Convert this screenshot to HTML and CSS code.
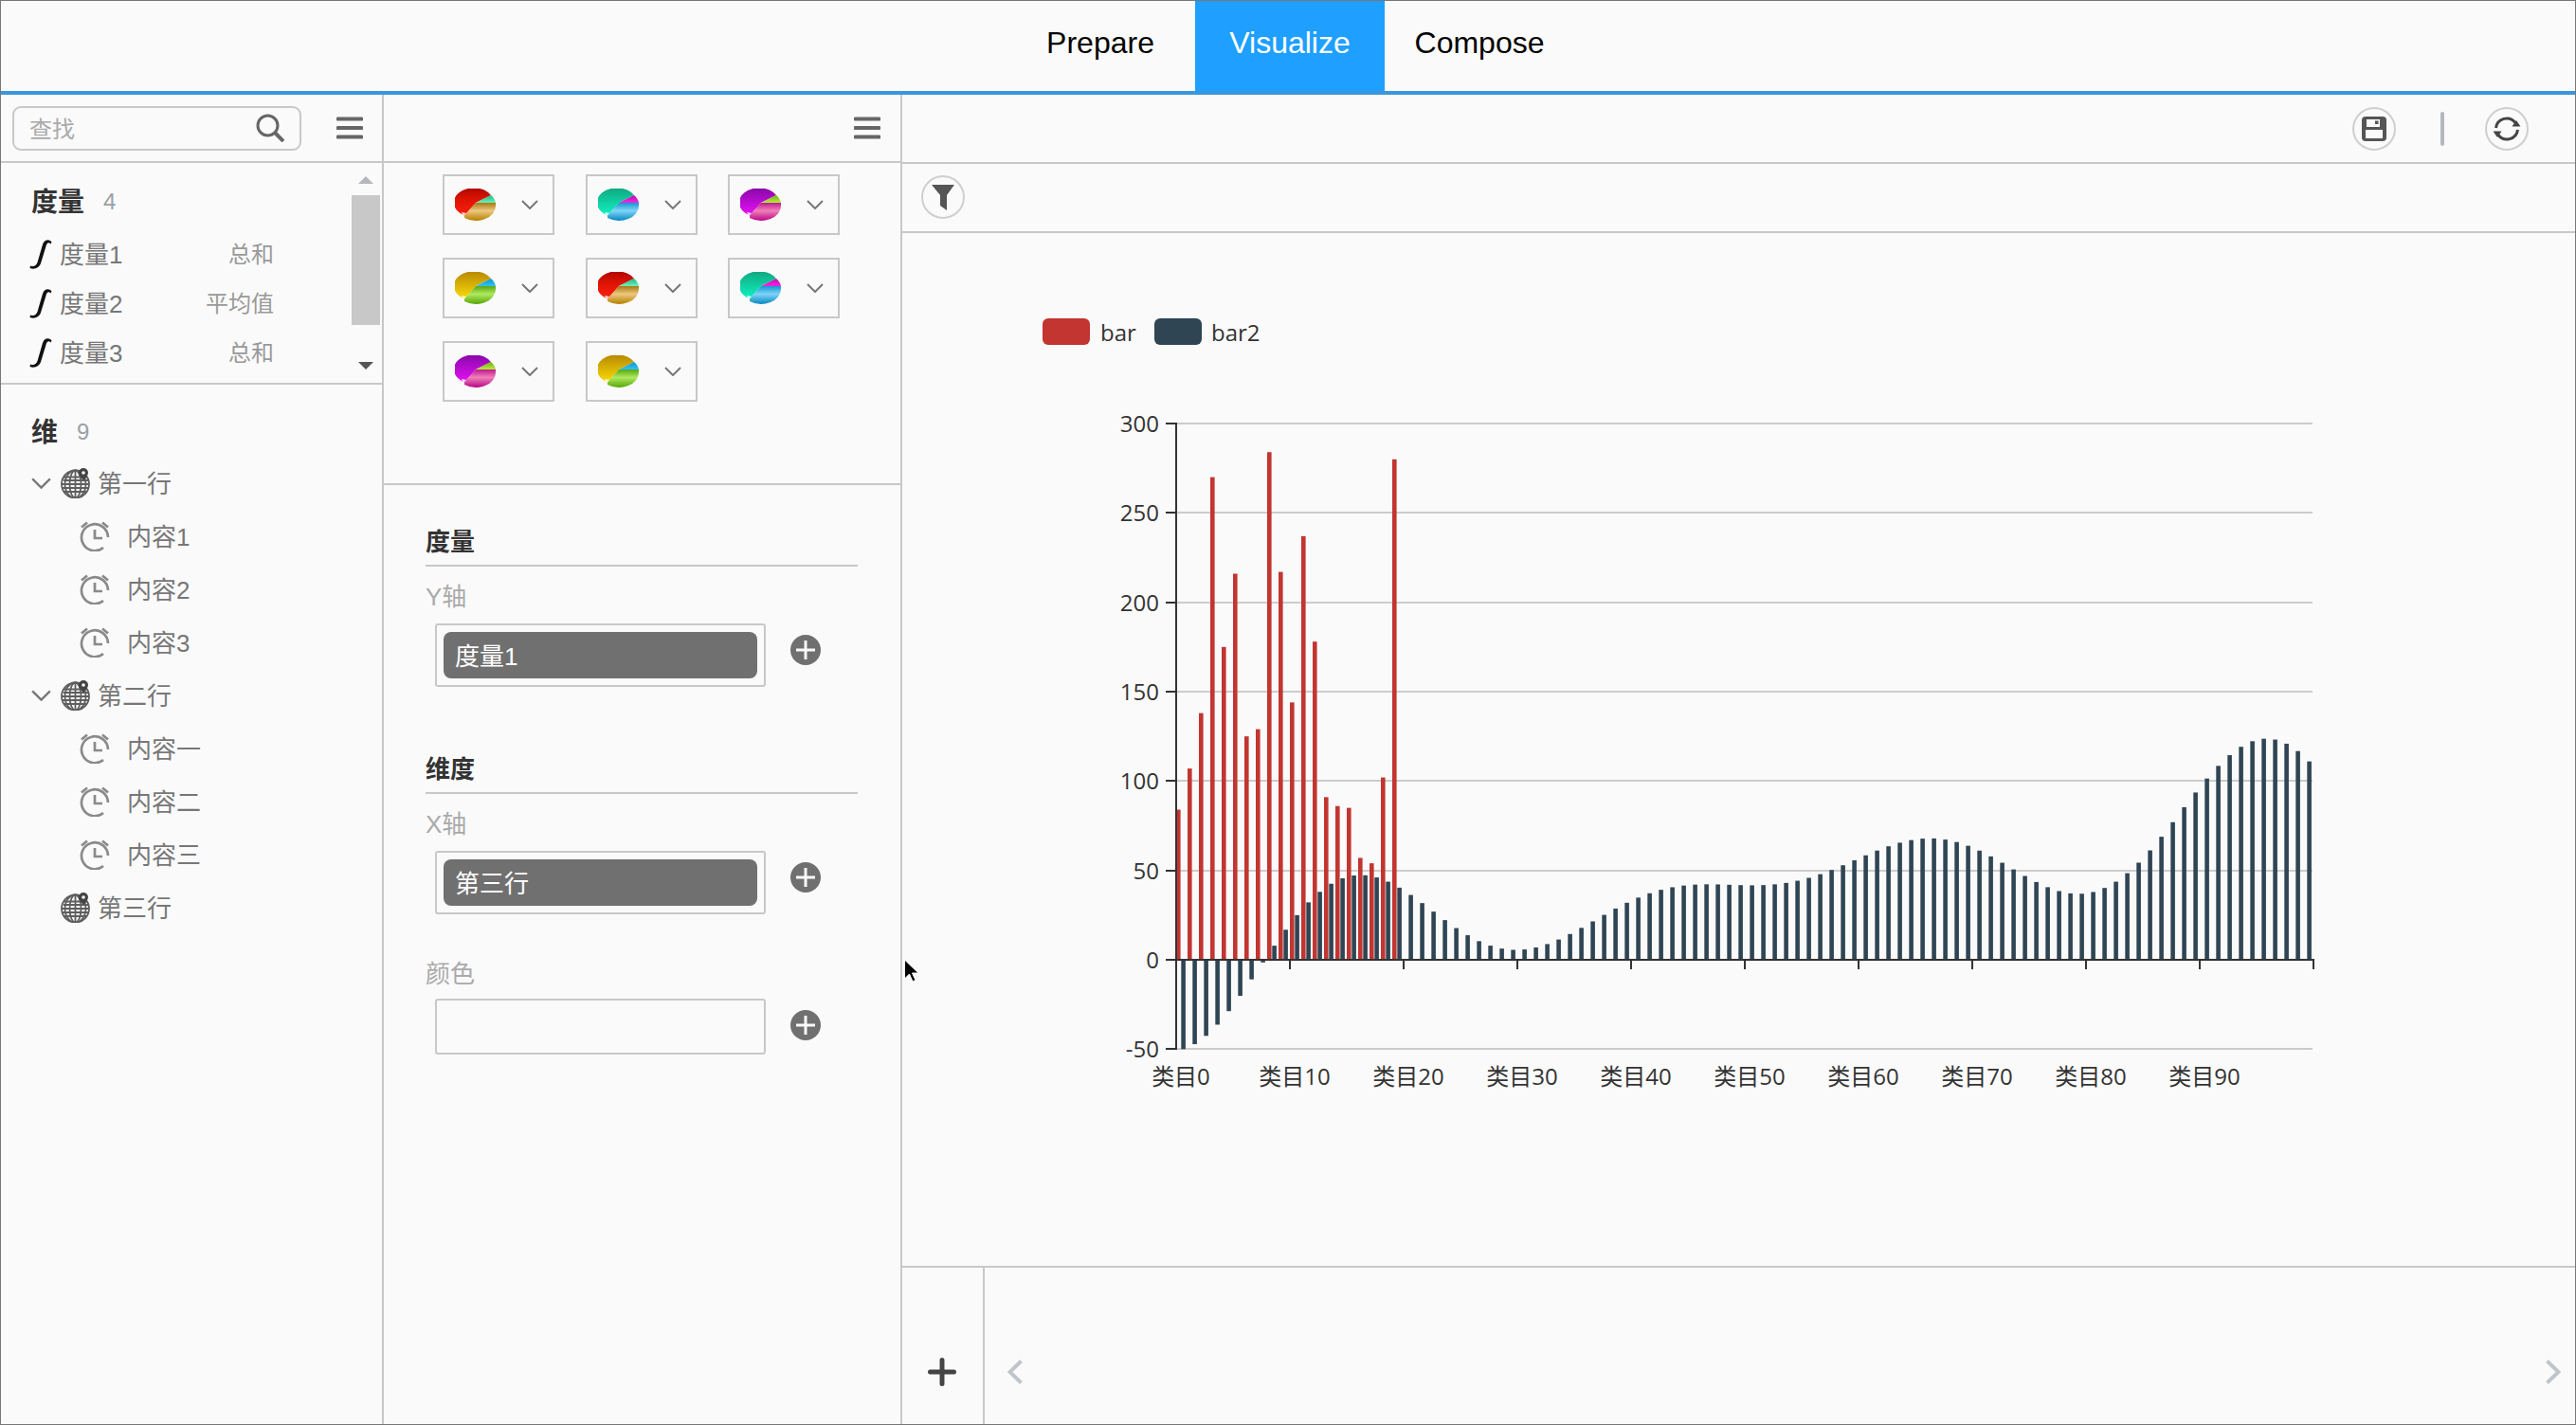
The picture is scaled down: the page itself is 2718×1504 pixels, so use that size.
FILE: index.html
```html
<!DOCTYPE html>
<html lang="zh">
<head>
<meta charset="utf-8">
<title>Visualize</title>
<link rel="stylesheet" href="styles.css">
</head>
<body>
<svg class="defs" width="0" height="0" aria-hidden="true">
  <defs>
    <linearGradient id="rm" x1="0" y1="0" x2="0" y2="1"><stop offset="0" stop-color="#b00800"/><stop offset=".45" stop-color="#e01404"/><stop offset="1" stop-color="#fa2010"/></linearGradient>
    <linearGradient id="rs" x1="0" y1="0" x2="0" y2="1"><stop offset="0" stop-color="#18b884"/><stop offset="1" stop-color="#70f0b8"/></linearGradient>
    <linearGradient id="rl" x1="0" y1="0" x2="0" y2="1"><stop offset="0" stop-color="#a87810"/><stop offset=".45" stop-color="#ecc880"/><stop offset="1" stop-color="#b88000"/></linearGradient>
    <linearGradient id="tm" x1="0" y1="0" x2="0" y2="1"><stop offset="0" stop-color="#10a880"/><stop offset="1" stop-color="#10f4c4"/></linearGradient>
    <linearGradient id="ts" x1="0" y1="0" x2="0" y2="1"><stop offset="0" stop-color="#b810a8"/><stop offset="1" stop-color="#f424e4"/></linearGradient>
    <linearGradient id="tl" x1="0" y1="0" x2="0" y2="1"><stop offset="0" stop-color="#1098d0"/><stop offset=".45" stop-color="#80d4f8"/><stop offset="1" stop-color="#0888c0"/></linearGradient>
    <linearGradient id="pm" x1="0" y1="0" x2="0" y2="1"><stop offset="0" stop-color="#8808a8"/><stop offset="1" stop-color="#e810f8"/></linearGradient>
    <linearGradient id="ps" x1="0" y1="0" x2="0" y2="1"><stop offset="0" stop-color="#70b010"/><stop offset="1" stop-color="#b8ec40"/></linearGradient>
    <linearGradient id="pl" x1="0" y1="0" x2="0" y2="1"><stop offset="0" stop-color="#c01890"/><stop offset=".45" stop-color="#f080b8"/><stop offset="1" stop-color="#b80888"/></linearGradient>
    <linearGradient id="gm" x1="0" y1="0" x2="0" y2="1"><stop offset="0" stop-color="#b88800"/><stop offset="1" stop-color="#fadc08"/></linearGradient>
    <linearGradient id="gs" x1="0" y1="0" x2="0" y2="1"><stop offset="0" stop-color="#1090d0"/><stop offset="1" stop-color="#30c4f0"/></linearGradient>
    <linearGradient id="gl" x1="0" y1="0" x2="0" y2="1"><stop offset="0" stop-color="#58a810"/><stop offset=".45" stop-color="#b0e860"/><stop offset="1" stop-color="#58a808"/></linearGradient>

    <symbol id="pie-red" viewBox="0 0 44 34"><path fill="url(#rm)" d="M22 15 38 7A21 15.500 0 1 0 10 28.500z"/><path fill="url(#rs)" d="M22 15 38 7A21 15.500 0 0 1 43 15z"/><path fill="url(#rl)" d="M22 15 43 15V18A21 15.500 0 0 1 10 31V28.500z"/><path fill="#ffe0d0" d="M7 25l5 1-3 3z"/></symbol>
    <symbol id="pie-teal" viewBox="0 0 44 34"><path fill="url(#tm)" d="M22 15 38 7A21 15.500 0 1 0 10 28.500z"/><path fill="url(#ts)" d="M22 15 38 7A21 15.500 0 0 1 43 15z"/><path fill="url(#tl)" d="M22 15 43 15V18A21 15.500 0 0 1 10 31V28.500z"/><path fill="#e0fff0" d="M7 25l5 1-3 3z"/></symbol>
    <symbol id="pie-purple" viewBox="0 0 44 34"><path fill="url(#pm)" d="M22 15 38 7A21 15.500 0 1 0 10 28.500z"/><path fill="url(#ps)" d="M22 15 38 7A21 15.500 0 0 1 43 15z"/><path fill="url(#pl)" d="M22 15 43 15V18A21 15.500 0 0 1 10 31V28.500z"/><path fill="#ffe0ff" d="M7 25l5 1-3 3z"/></symbol>
    <symbol id="pie-gold" viewBox="0 0 44 34"><path fill="url(#gm)" d="M22 15 38 7A21 15.500 0 1 0 10 28.500z"/><path fill="url(#gs)" d="M22 15 38 7A21 15.500 0 0 1 43 15z"/><path fill="url(#gl)" d="M22 15 43 15V18A21 15.500 0 0 1 10 31V28.500z"/><path fill="#fff8d0" d="M7 25l5 1-3 3z"/></symbol>

    <symbol id="menu" viewBox="0 0 28 24"><path d="M1.500 2.500h25M1.500 12h25M1.500 21.500h25" fill="none" stroke="#666" stroke-width="4" stroke-linecap="round"/></symbol>
    <symbol id="chev" viewBox="0 0 18 10"><path d="M1 1l8 8 8-8" fill="none" stroke="#777" stroke-width="2"/></symbol>
    <symbol id="fx" viewBox="0 0 24 32"><path fill="#111" d="M23.500 3.500C21 .2 16 .2 14 6L8.500 25C7.500 28 5 30 1 28.500L.5 31C6 33 10.500 30 12 26L17.500 8C18.500 4 20.500 3.500 22.500 5.500z"/></symbol>
    <symbol id="globe" viewBox="0 0 32 32">
      <g fill="none" stroke="#5f5f5f" stroke-width="1.800"><circle cx="15.500" cy="17" r="14.500"/><ellipse cx="15.500" cy="17" rx="6" ry="14.500"/><ellipse cx="15.500" cy="17" rx="11" ry="14.500"/><path d="M15.500 2.500v29M1 17h29M3 9.500h25M3 13h26M2 21h27M3 25h25"/></g>
      <path d="M24 0a5 5 0 0 1 5 5c0 3-5 8-5 8s-5-5-5-8a5 5 0 0 1 5-5z" fill="#444"/><circle cx="24" cy="5" r="1.800" fill="#fafafa"/>
    </symbol>
    <symbol id="clock" viewBox="0 0 32 32"><g fill="none" stroke="#8a8a8a" stroke-width="2.700"><path d="M25 28A14 14 0 1 1 30 17"/><path d="M16 9v9h8"/><path d="M2 6.500 8 1.500M24 1.500l6 5"/></g></symbol>
    <symbol id="plus" viewBox="0 0 32 32"><circle cx="16" cy="16" r="16" fill="#707070"/><path d="M6 16h20M16 6v20" stroke="#fafafa" stroke-width="3"/></symbol>
  </defs>
</svg>

<div class="app">
  <header class="topbar">
    <nav class="tabs">
      <a class="tab">Prepare</a>
      <a class="tab tab-active">Visualize</a>
      <a class="tab">Compose</a>
    </nav>
  </header>

  <main class="workspace">
    <aside class="data-panel">
      <div class="panel-head">
        <div class="search">
          <span class="search-text">查找</span>
          <svg class="search-icon" viewBox="0 0 30 30"><circle cx="12.500" cy="12.500" r="10.500" fill="none" stroke="#666" stroke-width="3"/><path d="M20 20l9 9" stroke="#666" stroke-width="4"/></svg>
        </div>
        <svg class="menu-icon"><use href="#menu"/></svg>
      </div>

      <section class="measures">
        <div class="measure-list">
          <h3 class="group-title">度量<span class="group-count">4</span></h3>
          <div class="measure"><svg class="fx"><use href="#fx"/></svg><span class="item-name">度量1</span><span class="agg">总和</span></div>
          <div class="measure"><svg class="fx"><use href="#fx"/></svg><span class="item-name">度量2</span><span class="agg">平均值</span></div>
          <div class="measure"><svg class="fx"><use href="#fx"/></svg><span class="item-name">度量3</span><span class="agg">总和</span></div>
        </div>
        <div class="scrollbar">
          <i class="arrow-up"></i>
          <i class="thumb"></i>
          <i class="arrow-down"></i>
        </div>
      </section>

      <section class="dimensions">
        <h3 class="group-title">维<span class="group-count">9</span></h3>
        <div class="tree-row"><svg class="tree-chev"><use href="#chev"/></svg><svg class="globe"><use href="#globe"/></svg><span class="item-name">第一行</span></div>
        <div class="leaf-row"><svg class="clock"><use href="#clock"/></svg><span class="item-name">内容1</span></div>
        <div class="leaf-row"><svg class="clock"><use href="#clock"/></svg><span class="item-name">内容2</span></div>
        <div class="leaf-row"><svg class="clock"><use href="#clock"/></svg><span class="item-name">内容3</span></div>
        <div class="tree-row"><svg class="tree-chev"><use href="#chev"/></svg><svg class="globe"><use href="#globe"/></svg><span class="item-name">第二行</span></div>
        <div class="leaf-row"><svg class="clock"><use href="#clock"/></svg><span class="item-name">内容一</span></div>
        <div class="leaf-row"><svg class="clock"><use href="#clock"/></svg><span class="item-name">内容二</span></div>
        <div class="leaf-row"><svg class="clock"><use href="#clock"/></svg><span class="item-name">内容三</span></div>
        <div class="tree-row tree-row-plain"><svg class="globe"><use href="#globe"/></svg><span class="item-name">第三行</span></div>
      </section>
    </aside>

    <section class="config-panel">
      <div class="panel-head panel-head-end">
        <svg class="menu-icon"><use href="#menu"/></svg>
      </div>
      <div class="chart-types">
        <div class="type-card"><svg class="pie"><use href="#pie-red"/></svg><svg class="card-chev"><use href="#chev"/></svg></div>
        <div class="type-card"><svg class="pie"><use href="#pie-teal"/></svg><svg class="card-chev"><use href="#chev"/></svg></div>
        <div class="type-card"><svg class="pie"><use href="#pie-purple"/></svg><svg class="card-chev"><use href="#chev"/></svg></div>
        <div class="type-card"><svg class="pie"><use href="#pie-gold"/></svg><svg class="card-chev"><use href="#chev"/></svg></div>
        <div class="type-card"><svg class="pie"><use href="#pie-red"/></svg><svg class="card-chev"><use href="#chev"/></svg></div>
        <div class="type-card"><svg class="pie"><use href="#pie-teal"/></svg><svg class="card-chev"><use href="#chev"/></svg></div>
        <div class="type-card"><svg class="pie"><use href="#pie-purple"/></svg><svg class="card-chev"><use href="#chev"/></svg></div>
        <div class="type-card"><svg class="pie"><use href="#pie-gold"/></svg><svg class="card-chev"><use href="#chev"/></svg></div>
      </div>
      <div class="shelves">
        <h4 class="shelf-title">度量</h4>
        <div class="shelf-label">Y轴</div>
        <div class="shelf-row">
          <div class="drop-box"><span class="chip">度量1</span></div>
          <svg class="add-btn"><use href="#plus"/></svg>
        </div>
        <h4 class="shelf-title shelf-title-next">维度</h4>
        <div class="shelf-label">X轴</div>
        <div class="shelf-row">
          <div class="drop-box"><span class="chip">第三行</span></div>
          <svg class="add-btn"><use href="#plus"/></svg>
        </div>
        <div class="shelf-label shelf-label-color">颜色</div>
        <div class="shelf-row shelf-row-color">
          <div class="drop-box drop-box-empty"></div>
          <svg class="add-btn"><use href="#plus"/></svg>
        </div>
      </div>
    </section>

    <section class="view-panel">
      <div class="view-toolbar">
        <span class="round-btn">
          <svg class="save-icon" viewBox="0 0 26 26"><path fill="#555" d="M4 0h18a4 4 0 0 1 4 4v18a4 4 0 0 1-4 4H4a4 4 0 0 1-4-4V4a4 4 0 0 1 4-4z"/><rect x="5" y="3" width="14" height="8" fill="#fafafa"/><rect x="14" y="4.500" width="3.500" height="3.500" fill="#555"/><rect x="4" y="14" width="18" height="9" fill="#fafafa"/></svg>
        </span>
        <i class="toolbar-sep"></i>
        <span class="round-btn">
          <svg class="refresh-icon" viewBox="0 0 30 30"><g fill="none" stroke="#444" stroke-width="3"><path d="M3.500 14A11.500 11.500 0 0 1 24 8.500"/><path d="M26.500 16A11.500 11.500 0 0 1 6 21.500"/></g><path fill="#444" d="M20.500 12.500h9l-4.500-6.500zM.5 17.500h9l-4.500 6.500z"/></svg>
        </span>
      </div>
      <div class="filter-bar">
        <span class="round-btn">
          <svg class="funnel-icon" viewBox="0 0 24 28"><path fill="#555" d="M0 1h24L16 12v16l-7-5V12z"/></svg>
        </span>
      </div>
      <div class="chart-area">
        <svg id="chart" class="chart" width="1765" height="1090" viewBox="952 246 1765 1090"></svg>
      </div>
      <div class="sheet-bar">
        <div class="sheet-add">
          <svg class="sheet-plus" viewBox="0 0 30 30"><path d="M2.500 15h25M15 2.500v25" stroke="#444" stroke-width="5" stroke-linecap="round"/></svg>
        </div>
        <div class="sheet-nav">
          <svg class="sheet-arrow" viewBox="0 0 16 26"><path d="M14.500 1.500 2.500 13l12 11.500" fill="none" stroke="#c0c5ca" stroke-width="4"/></svg>
          <svg class="sheet-arrow" viewBox="0 0 16 26"><path d="M1.500 1.500 13.500 13l-12 11.500" fill="none" stroke="#c0c5ca" stroke-width="4"/></svg>
        </div>
      </div>
    </section>
  </main>

  <svg class="cursor" viewBox="0 0 17 26"><path d="M1.500 1v20l5-5 3.500 8 3-1.500-3.500-7.500H16z" fill="#000" stroke="#fff" stroke-width="1"/></svg>
</div>
<script src="script.js"></script>
</body>
</html>
```
FILE: styles.css
```css
* { box-sizing: border-box; }
html, body { margin: 0; padding: 0; background: #fafafa; }
body {
  width: 2718px; height: 1504px; overflow: hidden;
  font-family: "Liberation Sans", "Noto Sans CJK SC", sans-serif;
  color: #777;
}
.defs { position: absolute; }
h3, h4 { margin: 0; }

.app {
  position: relative;
  width: 2718px; height: 1504px;
  border: 1px solid #777;
  display: flex; flex-direction: column;
  background: #fafafa;
}

/* top bar */
.topbar { flex: 0 0 99px; border-bottom: 4px solid #3a96dd; }
.tabs { display: flex; justify-content: center; height: 95px; padding-left: 4px; }
.tab { width: 200px; display: flex; align-items: center; justify-content: center; font-size: 32px; color: #000; padding-bottom: 6px; }
.tab-active { background: #1f9fff; color: #fff; }

.workspace { flex: 1; display: flex; min-height: 0; }

.panel-head { height: 72px; border-bottom: 2px solid #c8c8c8; display: flex; align-items: center; }
.panel-head-end { justify-content: flex-end; padding-right: 21px; }
.menu-icon { width: 28px; height: 24px; display: block; }

/* left panel */
.data-panel { width: 404px; border-right: 2px solid #c8c8c8; display: flex; flex-direction: column; }
.data-panel .panel-head { padding-left: 12px; gap: 37px; }
.search { width: 305px; height: 47px; border: 2px solid #c8c8c8; border-radius: 9px; display: flex; align-items: center; padding: 0 16px 0 16px; }
.search-text { font-size: 24px; color: #aaa; margin-bottom: 2px; }
.search-icon { width: 30px; height: 30px; margin-left: auto; }

.measures { height: 234px; border-bottom: 2px solid #c8c8c8; display: flex; }
.measure-list { flex: 1; padding-top: 13px; }
.group-title { height: 52px; padding-left: 32px; display: flex; align-items: center; font-size: 28px; font-weight: 700; color: #333; }
.group-count { margin: 3px 0 0 20px; font-size: 24px; font-weight: 400; color: #9aa0a6; }
.measure { height: 52px; display: flex; align-items: center; padding: 0 82px 0 30px; font-size: 26px; }
.measure-list .group-title { margin-bottom: 5px; }
.fx { width: 24px; height: 32px; margin-right: 8px; flex: none; }
.item-name { color: #777; white-space: nowrap; margin-bottom: 3px; }
.agg { margin: 0 0 3px auto; font-size: 24px; color: #999; }

.scrollbar { width: 30px; margin-right: 2px; padding-top: 14px; display: flex; flex-direction: column; align-items: center; }
.scrollbar i { display: block; }
.arrow-up { width: 0; height: 0; border: 8px solid transparent; border-top: 0; border-bottom-color: #b4b8bc; }
.thumb { width: 30px; height: 137px; margin-top: 12px; background: #c8c8c8; }
.arrow-down { width: 0; height: 0; margin-top: 39px; border: 8px solid transparent; border-bottom: 0; border-top-color: #555; }

.dimensions { padding-top: 22px; }
.dimensions .group-title { margin-bottom: 2px; }
.tree-row, .leaf-row { height: 56px; display: flex; align-items: center; font-size: 26px; }
.tree-row { padding-left: 32px; }
.tree-row-plain { padding-left: 63px; }
.tree-chev { width: 21px; height: 12px; margin-right: 10px; }
.globe { width: 32px; height: 32px; margin-right: 7px; }
.leaf-row { padding-left: 83px; }
.clock { width: 32px; height: 32px; margin-right: 18px; }

/* config panel */
.config-panel { width: 547px; border-right: 2px solid #c8c8c8; display: flex; flex-direction: column; }
.chart-types {
  height: 340px; border-bottom: 2px solid #c8c8c8;
  padding: 12px 0 0 62px;
  display: grid;
  grid-template-columns: repeat(3, 118px);
  grid-auto-rows: 64px;
  column-gap: 32.5px; row-gap: 24px;
  align-content: start;
}
.type-card { border: 2px solid #c8c8c8; display: flex; align-items: center; padding-left: 11px; }
.pie { width: 44px; height: 34px; flex: none; }
.card-chev { width: 18px; height: 10px; margin-left: 26px; flex: none; }

.shelves { padding: 0 0 0 44px; }
.shelf-title { width: 456px; height: 44px; margin-top: 42px; padding-bottom: 6px; border-bottom: 2px solid #c8c8c8; font-size: 26px; line-height: 36px; font-weight: 700; color: #333; }
.shelf-title-next { margin-top: 69px; }
.shelf-label { height: 32px; margin-top: 15px; font-size: 26px; line-height: 34px; color: #aaa; }
.shelf-label-color { margin-top: 46px; }
.shelf-row { display: flex; align-items: flex-start; margin-top: 13px; padding-left: 10px; }
.shelf-row-color { margin-top: 11px; }
.drop-box { width: 349px; height: 67px; border: 2px solid #c8c8c8; border-radius: 3px; padding: 7px; }
.drop-box-empty { height: 59px; }
.chip { display: flex; align-items: center; height: 49px; padding: 0 0 3px 12px; border-radius: 8px; background: #707070; color: #fff; font-size: 26px; }
.add-btn { width: 32px; height: 32px; margin: 12px 0 0 26px; flex: none; }

/* view panel */
.view-panel { flex: 1; min-width: 0; display: flex; flex-direction: column; }
.view-toolbar { height: 73px; border-bottom: 2px solid #c8c8c8; display: flex; align-items: center; justify-content: flex-end; padding-right: 49px; gap: 47px; }
.round-btn { width: 46px; height: 46px; border: 2px solid #cfcfcf; border-radius: 50%; display: flex; align-items: center; justify-content: center; flex: none; }
.save-icon { width: 26px; height: 26px; }
.refresh-icon { width: 30px; height: 30px; }
.funnel-icon { width: 24px; height: 28px; }
.toolbar-sep { width: 4px; height: 36px; margin-right: -4px; border-radius: 2px; background: #b4b8bc; }
.filter-bar { height: 73px; border-bottom: 2px solid #c8c8c8; display: flex; align-items: center; padding: 0 0 2px 20px; }

.chart-area { flex: 1; min-height: 0; }
.chart { display: block; }
.chart .grid { stroke: #ccc; stroke-width: 2; }
.chart .axis { stroke: #333; stroke-width: 2; }
.chart .bar-a { fill: #c23531; }
.chart .bar-b { fill: #2f4554; }
.chart text { font-family: "Open Sans", "Noto Sans CJK SC", sans-serif; font-size: 24px; fill: #333; }
.chart .y-label { text-anchor: end; }
.chart .x-label { text-anchor: middle; }

.sheet-bar { height: 167px; border-top: 2px solid #c8c8c8; display: flex; }
.sheet-add { width: 87px; border-right: 2px solid #c8c8c8; display: flex; align-items: flex-end; justify-content: center; padding: 0 1px 40px 0; }
.sheet-plus { width: 30px; height: 30px; }
.sheet-nav { flex: 1; display: flex; align-items: flex-end; justify-content: space-between; padding: 0 15px 42px 24px; }
.sheet-arrow { width: 16px; height: 26px; }

.cursor { position: absolute; left: 952px; top: 1011px; width: 17px; height: 26px; }
```
FILE: script.js
```js
(function () {
  var NS = 'http://www.w3.org/2000/svg';
  var svg = document.getElementById('chart');
  var X0 = 1241, Y0 = 1013, UNIT = 94.33 / 50, BAND = 12;
  var red = [84,107,138,270,175,216,125,129,284,217,144,237,178,91,86,85,57,54,102,280];

  function el(name, attrs, text) {
    var n = document.createElementNS(NS, name);
    for (var k in attrs) n.setAttribute(k, attrs[k]);
    if (text !== undefined) n.textContent = text;
    svg.appendChild(n);
    return n;
  }
  function text(cls, x, y, s) {
    el('text', { 'class': cls, x: x, y: y }, s);
  }

  // legend
  el('rect', { 'class': 'bar-a', x: 1100, y: 336, width: 50, height: 28, rx: 6 });
  text('legend', 1161, 359.5, 'bar');
  el('rect', { 'class': 'bar-b', x: 1218, y: 336, width: 50, height: 28, rx: 6 });
  text('legend', 1278, 359.5, 'bar2');

  // grid + y labels
  for (var v = -50; v <= 300; v += 50) {
    var y = Math.round(Y0 - v * UNIT);
    if (v !== 0) el('line', { 'class': 'grid', x1: X0, x2: 2440, y1: y, y2: y });
    el('line', { 'class': 'axis', x1: 1230, x2: X0, y1: y, y2: y });
    text('y-label', 1223, y + 8.5, String(v));
  }

  // bars
  red.forEach(function (val, i) {
    var h = val * UNIT;
    el('rect', { 'class': 'bar-a', x: X0 + BAND * i, y: Y0 - h, width: 4.6, height: h });
  });
  for (var i = 0; i < 100; i++) {
    var d = (Math.cos(i / 5) * (i / 5 - 10) + i / 6) * 5;
    var hh = Math.abs(d) * UNIT;
    el('rect', { 'class': 'bar-b', x: X0 + 5.3 + BAND * i, y: d >= 0 ? Y0 - hh : Y0, width: 4.6, height: hh });
  }

  // axes
  el('line', { 'class': 'axis', x1: X0, x2: X0, y1: 446, y2: 1108 });
  el('line', { 'class': 'axis', x1: X0, x2: 2442, y1: Y0, y2: Y0 });
  for (var t = 0; t <= 100; t += 10) {
    var tx = X0 + BAND * t;
    el('line', { 'class': 'axis', x1: tx, x2: tx, y1: Y0, y2: 1023 });
    if (t < 100) text('x-label', tx + 5, 1145, '类目' + t);
  }
})();
```
